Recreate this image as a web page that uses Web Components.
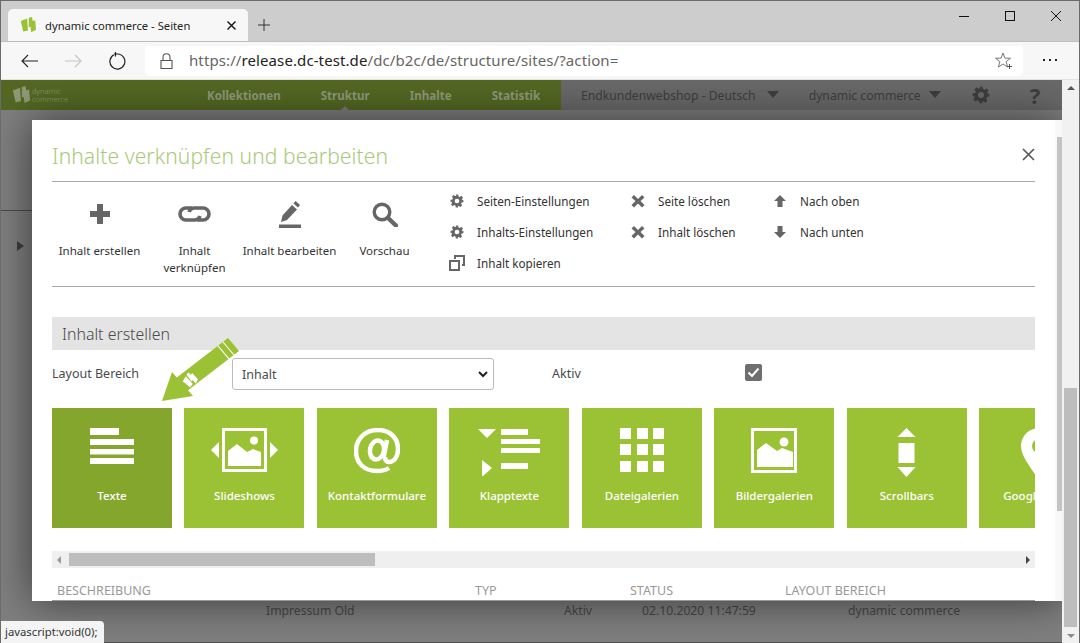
<!DOCTYPE html>
<html lang="de"><head><meta charset="utf-8"><title>dynamic commerce - Seiten</title>
<style>
html,body{margin:0;padding:0;width:1080px;height:643px;overflow:hidden;background:#666}
body{font-family:"Noto Sans","Open Sans",sans-serif}
</style></head><body>
<browser-window>
  <browser-tabs slot="tabs"></browser-tabs>
  <browser-toolbar slot="toolbar"></browser-toolbar>
  <page-backdrop slot="page"></page-backdrop>
  <content-modal slot="page"></content-modal>
  <page-scrollbar slot="page"></page-scrollbar>
  <status-tip slot="page">javascript:void(0);</status-tip>
</browser-window>
<script>
function def(name,html,init){
  customElements.define(name,class extends HTMLElement{
    constructor(){super();this.attachShadow({mode:'open'}).innerHTML=typeof html==='function'?html(this):html;}
    connectedCallback(){if(init)init(this);}
  });
}
const ICONS={
 logo:'<svg viewBox="0 0 20 20" width="100%" height="100%"><path fill="currentColor" d="M1 5l8-3 1 15-6 1zM11 1l4-1 1 5 3-1 1 12-6 3-1-7-2 1z"/></svg>',
 gear:'<svg viewBox="0 0 24 24" width="100%" height="100%"><path fill="currentColor" fill-rule="evenodd" d="M10 1h4l.7 3.200 1.900.8 2.800-1.800 2.800 2.800-1.800 2.800.8 1.900L23 10v4l-3.200.7-.8 1.900 1.800 2.800-2.800 2.800-2.800-1.800-1.900.8L14 23h-4l-.7-3.200-1.900-.8-2.800 1.800-2.800-2.800 1.800-2.800-.8-1.900L1 14v-4l3.200-.7.8-1.900-1.800-2.800 2.800-2.800 2.800 1.800 1.900-.8zM12 8a4 4 0 100 8 4 4 0 000-8z"/></svg>',
 x:'<svg viewBox="0 0 14 14" width="100%" height="100%"><path fill="currentColor" d="M3 1l4 4 4-4 2.500 2.500-4 3.500 4 4L11 13.500l-4-4-4 4L.5 11l4-4-4-3.500z"/></svg>',
 up:'<svg viewBox="0 0 14 14" width="100%" height="100%"><path fill="currentColor" d="M7 1l6 6H9.500v6h-5V7H1z"/></svg>',
 down:'<svg viewBox="0 0 14 14" width="100%" height="100%"><path fill="currentColor" d="M7 13l6-6H9.500V1h-5v6H1z"/></svg>',
 copy:'<svg viewBox="0 0 16 16" width="100%" height="100%"><path fill="currentColor" fill-rule="evenodd" d="M5 0h11v11h-3V9h1V2H7v2H5zM0 5h11v11H0zM2 7v7h7V7z"/></svg>',
 plus:'<svg viewBox="0 0 20 20" width="100%" height="100%"><path fill="currentColor" d="M7 0h6v7h7v6h-7v7H7v-7H0V7h7z"/></svg>',
 link:'<svg viewBox="0 0 33 16" width="100%" height="100%"><g fill="none" stroke="currentColor" stroke-width="3.600"><path d="M14 2H8a6 6 0 000 12h9a6 6 0 005-4"/><path d="M19 14h6a6 6 0 000-12h-9a6 6 0 00-5 4"/></g></svg>',
 pen:'<svg viewBox="0 0 22 27" width="100%" height="100%"><path fill="currentColor" d="M16.500 0L21 4l-2 2.500L14.500 2.500zM13 4l5 4.500L8 19l-6 2 1.500-6.500zM0 23.500h22V27H0z"/></svg>',
 search:'<svg viewBox="0 0 26 25" width="100%" height="100%"><circle cx="10" cy="10" r="7.800" fill="none" stroke="currentColor" stroke-width="3.400"/><path d="M16 16l8 7.500" stroke="currentColor" stroke-width="4.400" stroke-linecap="round"/></svg>',
 lines:'<svg viewBox="0 0 44 36" width="44" height="36"><path fill="#fff" d="M0 0h29v7H0zM0 11h44v6H0zM0 21h44v5.500H0zM0 30h44v6H0z"/></svg>',
 slides:'<svg viewBox="0 0 67 44" width="67" height="44"><path fill="#fff" d="M8 14v16L0 22zM59 14v16l8-8z"/><path fill="#fff" fill-rule="evenodd" d="M11 0h45v44H11zM14 3v38h39V3z"/><circle cx="43" cy="12.500" r="4" fill="#fff"/><path fill="#fff" d="M17 38V23l9-7 10 8 6-3 8 3v14z"/></svg>',
 at:'<svg viewBox="0 0 46 46" width="46" height="46"><g fill="none" stroke="#fff" stroke-width="4.500"><path d="M35 40c-3 2-7 3-12 3C10 43 2 35 2 23 2 11 11 2 24 2c11 0 20 7 20 19 0 8-4 13-9 13-3 0-4-2-4-5"/><ellipse cx="23" cy="22" rx="7" ry="9.500" transform="rotate(12 23 22)"/><path d="M33 12l-3.500 18"/></g></svg>',
 accordion:'<svg viewBox="0 0 62 48" width="62" height="48"><path fill="#fff" d="M0 1h18L9 10zM23 1h27v6H23zM23 11h39v5H23zM23 20h39v5H23zM4 32l10 8-10 9zM23 35h27v6H23z"/></svg>',
 grid:'<svg viewBox="0 0 44 44" width="44" height="44"><path fill="#fff" d="M0 0h11v11H0zM17 0h11v11H17zM33 0h11v11H33zM0 16h11v11H0zM17 16h11v11H17zM33 16h11v11H33zM0 33h11v11H0zM17 33h11v11H17zM33 33h11v11H33z"/></svg>',
 image:'<svg viewBox="0 0 46 45" width="46" height="45"><path fill="#fff" fill-rule="evenodd" d="M0 0h46v45H0zM3 3v39h40V3z"/><circle cx="33" cy="14" r="4.500" fill="#fff"/><path fill="#fff" d="M6 39V22l9-7 11 8 5-3 11 4v15z"/></svg>',
 scroll:'<svg viewBox="0 0 19 49" width="19" height="49"><path fill="#fff" d="M9.500 0l9 9H.500zM1.500 15h16v20h-16zM.500 39h18l-9 10z"/></svg>',
 pin:'<svg viewBox="0 0 36 52" width="36" height="52"><path fill="#fff" fill-rule="evenodd" d="M18 0c10 0 18 8 18 18 0 10-10 22-18 34C10 40 0 28 0 18 0 8 8 0 18 0zM18 11a7 7 0 100 14 7 7 0 000-14z"/></svg>'
};
def('browser-window',`<style>
:host{display:flex;flex-direction:column;width:1080px;height:643px;box-sizing:border-box;border:1px solid #6b6b6b;border-bottom:0;background:#cdcdcd;overflow:hidden}
.page{position:relative;flex:1;overflow:hidden;margin:0 -1px}
</style><slot name="tabs"></slot><slot name="toolbar"></slot><div class="page"><slot name="page"></slot></div>`);
def('browser-tabs',`<style>
:host{display:flex;align-items:flex-end;height:40px;background:#cdcdcd;padding-left:7px;font:11.200px "Noto Sans",sans-serif;color:#222;position:relative}
.tab{width:240px;height:32px;background:#f7f7f7;border-radius:5px 5px 0 0;display:flex;align-items:center;box-sizing:border-box;padding:0 0 0 12px}
.fav{width:16px;height:16px;color:#9bc234;margin-right:9px}
.t{flex:1;letter-spacing:.02px;white-space:nowrap}
.close{width:9px;height:9px;margin-right:12px;color:#111}
.new{width:12px;height:12px;margin:0 0 10px 10px;align-self:flex-end}
.ctrl{margin-left:auto;display:flex;align-self:flex-start;height:30px;align-items:center;gap:36px;padding-right:18px}
.ctrl svg{display:block}
</style>
<div class="tab"><span class="fav">${ICONS.logo}</span><span class="t">dynamic commerce - Seiten</span>
<svg class="close" viewBox="0 0 9 9"><path d="M.5.5l8 8M8.500.5l-8 8" stroke="#111" stroke-width="1.400"/></svg></div>
<svg class="new" viewBox="0 0 12 12"><path d="M6 0v12M0 6h12" stroke="#333" stroke-width="1"/></svg>
<div class="ctrl"><svg width="10" height="10" viewBox="0 0 10 10"><path d="M0 5.500h10" stroke="#111"/></svg>
<svg width="10" height="10" viewBox="0 0 10 10"><rect x=".5" y=".5" width="9" height="9" fill="none" stroke="#111"/></svg>
<svg width="10" height="10" viewBox="0 0 10 10"><path d="M0 0l10 10M10 0L0 10" stroke="#111"/></svg></div>`);
def('browser-toolbar',`<style>
:host{display:flex;align-items:center;height:39px;background:#f7f7f7;border-top:1px solid #bdbdbd;border-bottom:1px solid #e2e2e2;border-left:1px solid #6b6b6b;border-right:1px solid #6b6b6b;box-sizing:border-box;margin:0 -1px;padding-left:20px;position:relative}
svg{display:block}
.nav{display:flex;gap:27px;align-items:center}
.addr{margin-left:19px;width:878px;height:30px;background:#fff;border-radius:4px;display:flex;align-items:center;box-sizing:border-box;padding-left:15px;font:15px "Noto Sans",sans-serif;color:#666;letter-spacing:.1px}
.addr b{font-weight:400;color:#222}
.url{margin-left:16px;flex:1;white-space:nowrap;margin-top:-1px}
.star{margin-right:11px}
.more{margin-left:20px}
</style>
<div class="nav">
<svg width="17" height="14" viewBox="0 0 17 14"><path d="M17 7H1M7 1L1 7l6 6" fill="none" stroke="#222" stroke-width="1.100"/></svg>
<svg width="17" height="14" viewBox="0 0 17 14"><path d="M0 7h16M10 1l6 6-6 6" fill="none" stroke="#c4c4c4" stroke-width="1.100"/></svg>
<svg width="17" height="18" viewBox="0 0 17 18"><path d="M5 2.800A7.500 7.500 0 108.500 2H5M6.500-.5v5" fill="none" stroke="#222" stroke-width="1.200"/></svg>
</div>
<div class="addr">
<svg width="13" height="16" viewBox="0 0 13 16"><path d="M1 7.500h11v8H1zM3 7.500V4.300a3.500 3.500 0 017 0v3.200" fill="none" stroke="#555" stroke-width="1.100"/></svg>
<span class="url">https://<b>release.dc-test.de</b>/dc/b2c/de/structure/sites/?action=</span>
<svg class="star" width="17" height="17" viewBox="0 0 17 17"><path d="M8 1l2 5.200h5.500l-4.400 3.400 1.500 5.400L8 12l-4.600 3 1.500-5.400L.5 6.200H6z" fill="none" stroke="#777"/><path d="M12 14.500h5M14.500 12v5" stroke="#555"/></svg>
</div>
<svg class="more" width="15" height="3" viewBox="0 0 15 3"><path fill="#222" d="M0 0h2v2H0zM6 0h2v2H6zM12 0h2v2h-2z"/></svg>`);
def('page-backdrop',`<style>
:host{display:flex;flex-direction:column;position:absolute;inset:0;background:#7f7f7f;font-family:"Noto Sans",sans-serif;color:#4d4d4d;border-left:1px solid #444;border-bottom:1px solid #505050;box-sizing:border-box}
.head{display:flex;height:30px;background:#546823;align-items:center;flex:none;padding-left:11px;color:#8c9a6a;font-size:11.600px}
.logo{display:flex;align-items:center;gap:2px;width:175px;color:#8f9a75}
.logo i{width:18px;height:18px}
.logo span{font:300 7.500px/8.500px "Noto Sans",sans-serif}
nav{display:flex;gap:40px;font-weight:700;color:#8f9a78;margin-left:20px;position:relative;white-space:nowrap}
nav span{position:relative}
nav .on::after{content:"";position:absolute;left:50%;bottom:-8px;margin-left:-5px;border:5px solid transparent;border-top:0;border-bottom-color:#7c7c7c}
.right{margin-left:auto;width:519px;box-sizing:border-box;height:30px;flex:none;background:#696969;display:flex;align-items:center;color:#3e3e3e;padding-left:20px;font-size:12.200px;white-space:nowrap}
.tri{display:inline-block;border:6px solid transparent;border-top:7px solid #3e3e3e;border-bottom:0;margin-left:11px;vertical-align:2px}
.drop+.drop .tri{margin-left:8px}
.drop+.drop{margin-left:30px}
.right i{width:18px;height:18px;margin-left:31px;color:#3e3e3e}
.right b{margin-left:40px;font-size:22px;line-height:1}
.rule{height:1px;background:#4d4d4d;margin-top:100px;width:32px}
.arrow{width:0;height:0;border:5px solid transparent;border-left:7px solid #3d3d3d;border-right:0;margin:30px 0 0 16px}
.row{position:absolute;left:265px;top:522px;display:flex;font-size:12.200px;color:#474747;white-space:nowrap}
.s1{width:298px}.s2{width:78px}.s3{width:206px}
</style>
<div class="head"><div class="logo"><i>${ICONS.logo}</i><span>dynamic<br>commerce</span></div>
<nav><span>Kollektionen</span><span class="on">Struktur</span><span>Inhalte</span><span>Statistik</span></nav>
<div class="right"><span class="drop">Endkundenwebshop - Deutsch<span class="tri"></span></span><span class="drop">dynamic commerce<span class="tri"></span></span><i>${ICONS.gear}</i><b>?</b></div></div>
<div class="rule"></div><div class="arrow"></div>
<div class="row"><span class="s1">Impressum Old</span><span class="s2">Aktiv</span><span class="s3">02.10.2020 11:47:59</span><span>dynamic commerce</span></div>`);
def('page-scrollbar',`<style>
:host{position:absolute;right:0;top:0;bottom:0;width:18px;background:#f1f1f1;display:flex;flex-direction:column;align-items:center;box-sizing:border-box;z-index:3;border-right:1px solid #444}
.a{width:0;height:0;border:4px solid transparent;margin-top:6px;border-bottom:4px solid #555;border-top:0}
.thumb{position:absolute;left:2px;width:13px;top:308px;height:239px;background:#bdbdbd}
.b{position:absolute;bottom:5px;width:0;height:0;border:4px solid transparent;border-top:4px solid #8a8a8a;border-bottom:0}
</style><div class="a"></div><div class="thumb"></div><div class="b"></div>`);
def('status-tip',`<style>
:host{position:absolute;left:0;bottom:0;height:22px;width:104px;background:#f4f4f4;border-radius:0 4px 0 0;font:11.300px/22px "Noto Sans",sans-serif;color:#333;padding-left:5px;box-sizing:border-box;white-space:nowrap;z-index:4}
</style><slot></slot>`);
def('content-modal',`<style>
:host{position:absolute;left:32px;top:40px;width:1030px;height:481px;background:#fff;display:flex;z-index:2;font-family:"Noto Sans",sans-serif;overflow:hidden;color:#4a4a4a;box-shadow:0 0 40px rgba(0,0,0,.55)}
.main{flex:1;min-width:0;padding:0 20px;display:flex;flex-direction:column}
.sb{width:7px;background:#f8f8f8;position:relative;flex:none}
.sb i{position:absolute;left:2px;width:5px;top:17px;height:374px;background:#c4c4c4}
.title{display:flex;align-items:center;justify-content:space-between;height:62px;border-bottom:1px solid #aaa;flex:none;box-sizing:border-box;padding-top:10px}
h1{margin:0;font:300 21px "Noto Sans",sans-serif;color:#a9c97a;letter-spacing:.1px}
.title svg{display:block}
.tools{display:flex;height:105px;border-bottom:1px solid #aaa;flex:none;box-sizing:border-box}
.head{margin-top:30px;height:33px;background:#e4e4e4;font:300 15.900px/35px "Noto Sans",sans-serif;padding-left:10px;color:#4a4a4a;flex:none}
.layout{display:flex;align-items:center;font-size:12.500px;height:32px;margin-top:8px;flex:none}
.layout .l{width:180px;margin-top:-1px}
.sel{width:262px;height:32px;box-sizing:border-box;border:1px solid #bbb;border-radius:3px;display:flex;align-items:center;justify-content:space-between;padding:0 5px 0 9px;font-size:12.500px}
.aktiv{margin-left:58px;width:193px;margin-top:-1px}
.check{width:17px;height:17px;background:#6f6f6f;border-radius:2px;display:flex;align-items:center;justify-content:center;margin-top:-4px}
.tiles{display:flex;gap:12.480px;overflow:hidden;margin-top:18px;flex:none;height:120px}
.hbar{margin-top:23px;height:17px;background:#efefef;position:relative;flex:none}
.hbar .th{position:absolute;left:17px;width:306px;top:2px;height:13px;background:#bdbdbd}
.hbar .l{position:absolute;left:5px;top:4.500px;border:4px solid transparent;border-right:4px solid #999;border-left:0}
.hbar .r{position:absolute;right:5px;top:4.500px;border:4px solid transparent;border-left:4px solid #444;border-right:0}
.cols{display:flex;height:33px;align-items:center;font-size:12.500px;color:#999;border-bottom:1px solid #999;box-sizing:border-box;padding-top:12px;padding-left:5px;flex:none;white-space:nowrap}
.cols .a{width:418px}.cols .b{width:155px}.cols .c{width:155px}
</style>
<div class="main">
<div class="title"><h1>Inhalte verknüpfen und bearbeiten</h1><svg width="13" height="13" viewBox="0 0 13 13" style="margin-top:-2px"><path d="M1 1l11 11M12 1L1 12" stroke="#555" stroke-width="1.600"/></svg></div>
<div class="tools">
<big-action icon="plus" iw="20" ih="20">Inhalt erstellen</big-action>
<big-action icon="link" iw="33" ih="16">Inhalt verknüpfen</big-action>
<big-action icon="pen" iw="22" ih="27">Inhalt bearbeiten</big-action>
<big-action icon="search" iw="26" ih="25">Vorschau</big-action>
<div style="display:flex;margin-left:18px">
<small-list w="181"><small-action icon="gear">Seiten-Einstellungen</small-action><small-action icon="gear">Inhalts-Einstellungen</small-action><small-action icon="copy" big>Inhalt kopieren</small-action></small-list>
<small-list w="142"><small-action icon="x">Seite löschen</small-action><small-action icon="x">Inhalt löschen</small-action></small-list>
<small-list w="120"><small-action icon="up">Nach oben</small-action><small-action icon="down">Nach unten</small-action></small-list>
</div></div>
<div class="head">Inhalt erstellen</div>
<div class="layout"><span class="l">Layout Bereich</span><div class="sel"><span>Inhalt</span><svg width="10" height="7" viewBox="0 0 10 7"><path d="M1 1l4 4 4-4" fill="none" stroke="#222" stroke-width="2"/></svg></div><span class="aktiv">Aktiv</span><div class="check"><svg width="13" height="11" viewBox="0 0 13 11"><path d="M1.500 5.500l3.500 3.500 6.500-7.500" fill="none" stroke="#fff" stroke-width="2"/></svg></div></div>
<div class="tiles">
<module-tile icon="lines" active>Texte</module-tile>
<module-tile icon="slides">Slideshows</module-tile>
<module-tile icon="at">Kontaktformulare</module-tile>
<module-tile icon="accordion">Klapptexte</module-tile>
<module-tile icon="grid">Dateigalerien</module-tile>
<module-tile icon="image">Bildergalerien</module-tile>
<module-tile icon="scroll">Scrollbars</module-tile>
<module-tile icon="pin">Google Maps</module-tile>
</div>
<div class="hbar"><span class="l"></span><span class="th"></span><span class="r"></span></div>
<div class="cols"><span class="a">BESCHREIBUNG</span><span class="b">TYP</span><span class="c">STATUS</span><span>LAYOUT BEREICH</span></div>
</div>
<div class="sb"><i></i></div>
<green-arrow></green-arrow>`);
def('big-action',h=>`<style>
:host{display:flex;flex-direction:column;align-items:center;width:95px;flex:none;font-size:11.500px;line-height:16.500px;text-align:center;color:#333}
.i{height:34px;margin-top:15px;display:flex;align-items:center;color:#666}
.t{margin-top:12px}
</style><div class="i"><span style="display:block;width:${h.getAttribute('iw')}px;height:${h.getAttribute('ih')}px">${ICONS[h.getAttribute('icon')]}</span></div><div class="t"><slot></slot></div>`);
def('small-list',h=>`<style>:host{display:flex;flex-direction:column;width:${h.getAttribute('w')}px;gap:11px;padding-top:9px}</style><slot></slot>`);
def('small-action',h=>`<style>
:host{display:flex;align-items:center;height:20px;font-size:11.700px;color:#333;white-space:nowrap}
i{display:block;width:14px;height:14px;margin-right:13px;color:#666;flex:none}
:host([big]) i{width:16px;height:16px;margin:0 12px 0 -1px}
</style><i>${ICONS[h.getAttribute('icon')]}</i><slot></slot>`);
def('module-tile',h=>`<style>
:host{display:flex;flex-direction:column;align-items:center;width:120px;height:120px;flex:none;background:${h.hasAttribute('active')?'#84a62c':'#9bc234'};color:#fff;font-size:11.500px;font-weight:500;white-space:nowrap}
.i{height:60px;margin-top:20px;display:flex;align-items:flex-start;justify-content:center}
svg{display:block}
</style><div class="i">${ICONS[h.getAttribute('icon')]}</div><div class="t"><slot></slot></div>`);
def('green-arrow',`<style>
:host{position:absolute;left:128px;top:216px;width:80px;height:66px;z-index:5}
svg{display:block;overflow:visible}
</style><svg width="80" height="66" viewBox="0 0 80 66"><path fill="#9bc234" d="M2 65L12 36l4.800 5.500L68 2l11 13-51 39.300L33 60z"/><path d="M63 6l11 13M58 9.900l11 13" stroke="#fff" stroke-width="1.100"/><g transform="translate(20 43) rotate(-38) scale(.7)"><path fill="#fff" d="M1 5l8-3 1 15-6 1zM11 1l4-1 1 5 3-1 1 12-6 3-1-7-2 1z"/></g></svg>`);
</script></body></html>
